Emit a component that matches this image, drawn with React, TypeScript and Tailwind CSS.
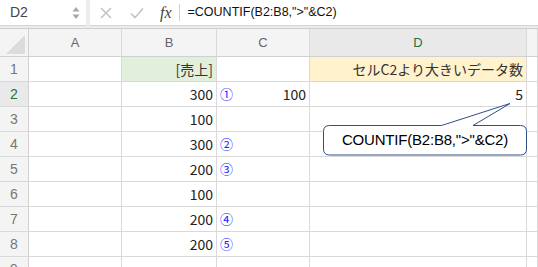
import React from "react";

const cols = [
  { key: "A", w: "w-[93px]" },
  { key: "B", w: "w-[95px]" },
  { key: "C", w: "w-[93px]" },
  { key: "D", w: "w-[217px]" },
  { key: "", w: "w-[11px]" },
];

const sales = [300, 100, 300, 200, 100, 200, 200];
const marks: Record<number, string> = { 2: "①", 4: "②", 5: "③", 7: "④", 8: "⑤" };

const cellFont = { fontFamily: '"Noto Sans CJK JP", "Noto Sans", sans-serif' };

function Cell({
  w,
  className = "",
  children,
}: {
  w: string;
  className?: string;
  children?: React.ReactNode;
}) {
  return (
    <div
      className={`${w} shrink-0 h-full border-r border-[#d9d9d9] flex items-center text-[14px] text-[#222] overflow-hidden ${className}`}
    >
      {children}
    </div>
  );
}

function FormulaBar() {
  return (
    <div className="h-[29px] flex bg-[#ececec] border-b border-[#cfcfcf]">
      <div className="w-[86px] h-[26px] bg-white border-b border-[#d4d4d4] flex items-center justify-between pl-[10px] pr-[6px]">
        <span className="text-[14px] text-[#444]" style={{ fontFamily: '"Liberation Sans", sans-serif' }}>
          D2
        </span>
        <svg width="8" height="14" viewBox="0 0 8 14">
          <path d="M4 1 L7.5 5.5 L0.5 5.5 Z" fill="#a8a8a8" />
          <path d="M4 13 L7.5 8.5 L0.5 8.5 Z" fill="#a8a8a8" />
        </svg>
      </div>
      <div className="ml-[4px] flex-1 h-[26px] bg-white border-b border-[#d4d4d4] flex items-center">
        <svg className="ml-[10px]" width="12" height="12" viewBox="0 0 12 12">
          <path d="M1 1 L11 11 M11 1 L1 11" stroke="#c4c4c4" strokeWidth="1.6" />
        </svg>
        <svg className="ml-[18px]" width="14" height="12" viewBox="0 0 14 12">
          <path d="M1 6.5 L5 10.5 L13 1.5" stroke="#c4c4c4" strokeWidth="1.6" fill="none" />
        </svg>
        <span
          className="ml-[16px] text-[16px] italic text-[#444] leading-none"
          style={{ fontFamily: '"Liberation Serif", serif' }}
        >
          fx
        </span>
        <div className="ml-[7px] w-px h-[17px] bg-[#cfcfcf]" />
        <span
          className="ml-[8px] text-[12.5px] text-[#111]"
          style={{ fontFamily: '"Liberation Sans", sans-serif' }}
        >
          =COUNTIF(B2:B8,"&gt;"&amp;C2)
        </span>
      </div>
    </div>
  );
}

function HeaderRow() {
  return (
    <div className="h-[28px] flex border-b border-[#d0d0d0]" style={{ fontFamily: '"Liberation Sans", sans-serif' }}>
      <div className="w-[29px] shrink-0 h-full bg-[#f4f4f4] border-r border-[#d0d0d0] relative">
        <svg className="absolute left-0 top-0" width="28" height="27" viewBox="0 0 28 27">
          <path d="M25 6 L25 25 L6 25 Z" fill="#dcdcdc" />
        </svg>
      </div>
      {cols.map((c, i) => (
        <div
          key={i}
          className={`${c.w} shrink-0 h-full border-r border-[#d9d9d9] flex items-center justify-center text-[13px] ${
            c.key === "D" ? "bg-[#e9e9e9] text-[#217346]" : "bg-[#f4f4f4] text-[#666]"
          }`}
        >
          {c.key}
        </div>
      ))}
    </div>
  );
}

function DataRow({ n }: { n: number }) {
  const sel = n === 2;
  const b = n >= 2 && n <= 8 ? sales[n - 2] : null;
  return (
    <div className="h-[25px] flex border-b border-[#d9d9d9]" style={cellFont}>
      <div
        className={`w-[29px] shrink-0 h-full border-r border-[#d0d0d0] flex items-center justify-center text-[14px] ${
          sel ? "bg-[#e9e9e9] text-[#217346]" : "bg-[#f4f4f4] text-[#777]"
        }`}
        style={{ fontFamily: '"Liberation Sans", sans-serif' }}
      >
        {n}
      </div>
      <Cell w="w-[93px]" />
      <Cell w="w-[95px]" className={`justify-end pr-[3px] ${n === 1 ? "bg-[#e2efda] text-[#333]" : ""}`}>
        {n === 1 ? "[売上]" : b}
      </Cell>
      <Cell w="w-[93px]" className="justify-between pl-[3px] pr-[3px]">
        <span className="text-[13px] text-[#2020ff]">{marks[n] ?? ""}</span>
        <span>{n === 2 ? 100 : ""}</span>
      </Cell>
      <Cell w="w-[217px]" className={`justify-end pr-[3px] ${n === 1 ? "bg-[#fff2cc] text-[#333]" : ""}`}>
        {n === 1 ? "セルC2より大きいデータ数" : n === 2 ? 5 : ""}
      </Cell>
      <Cell w="w-[11px]" />
    </div>
  );
}

export default function App() {
  return (
    <div className="relative w-[538px] h-[267px] overflow-hidden bg-white">
      <FormulaBar />
      <HeaderRow />
      {[1, 2, 3, 4, 5, 6, 7, 8, 9].map((n) => (
        <DataRow key={n} n={n} />
      ))}

      {/* callout */}
      <svg className="absolute left-0 top-0 pointer-events-none" width="538" height="267" viewBox="0 0 538 267">
        <path
          d="M329.5 125.5 L441.5 125.5 L510 103.5 L473 125.5 L520.5 125.5 Q526.5 125.5 526.5 131.5 L526.5 149 Q526.5 155 520.5 155 L329.5 155 Q323.5 155 323.5 149 L323.5 131.5 Q323.5 125.5 329.5 125.5 Z"
          fill="white"
          stroke="#2f4f86"
          strokeWidth="1"
        />
      </svg>
      <div
        className="absolute left-[323px] top-[125px] w-[204px] h-[30px] flex items-center justify-center text-[15px] tracking-[-0.2px] text-black"
        style={{ fontFamily: '"Liberation Sans", sans-serif' }}
      >
        COUNTIF(B2:B8,"&gt;"&amp;C2)
      </div>
    </div>
  );
}
